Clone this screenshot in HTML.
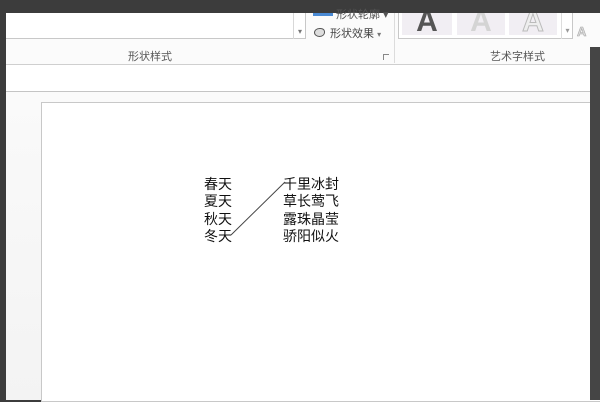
<!DOCTYPE html>
<html><head><meta charset="utf-8"><style>
body{margin:0;width:600px;height:400px;overflow:hidden;background:#3c3c3c;position:relative;font-family:"Liberation Sans","Noto Sans CJK SC",sans-serif}
div{position:absolute;box-sizing:border-box}
.t{font-size:14px;line-height:17.3px;color:#111;white-space:pre}
</style></head><body>
<div style="left:6px;top:13px;width:594px;height:52px;background:#fbfbfb;border-bottom:1px solid #cfcfcf"></div>
<div style="left:6px;top:13px;width:300px;height:26px;border-bottom:1px solid #c8c8c8;border-right:1px solid #c8c8c8;background:#fff"></div>
<div style="left:293px;top:13px;width:13px;height:26px;border-left:1px solid #d8d8d8;font-size:8px;color:#777;text-align:center;line-height:10px;padding-top:14px">▾</div>
<div style="left:313px;top:13px;width:20px;height:3px;background:#4a8ad4"></div>
<div style="left:336px;top:6px;font-size:11px;color:#555">形状轮廓 ▾</div>
<div style="left:314px;top:28px;width:11px;height:9px;border:1.5px solid #555;border-radius:50% 40% 50% 50%;background:#ddd"></div>
<div style="left:330px;top:25px;font-size:11px;color:#444">形状效果 <span style="font-size:8px;color:#777">▾</span></div>
<div style="left:394px;top:13px;width:1px;height:50px;background:#dcdcdc"></div>
<div style="left:398px;top:13px;width:175px;height:26px;border:1px solid #c8c8c8;border-top:none;background:#fff"></div>
<div style="left:402px;top:13px;width:50px;height:22px;background:#f1eef3;font-size:30px;font-weight:bold;color:#555;text-align:center;line-height:14px;overflow:hidden"><span style="position:relative;top:2px">A</span></div>
<div style="left:457px;top:13px;width:48px;height:22px;background:#f1eef3;font-size:30px;font-weight:bold;color:#d4d4d4;text-align:center;line-height:14px;overflow:hidden"><span style="position:relative;top:2px">A</span></div>
<div style="left:509px;top:13px;width:48px;height:22px;background:#f1eef3;font-size:30px;font-weight:bold;color:#eee;-webkit-text-stroke:1px #bbb;text-align:center;line-height:14px;overflow:hidden"><span style="position:relative;top:2px">A</span></div>
<div style="left:561px;top:13px;width:12px;height:26px;border-left:1px solid #ddd;font-size:8px;color:#999;text-align:center;padding-top:13px">▾</div>
<div style="left:577px;top:24px;font-size:13px;font-weight:bold;color:#ddd;-webkit-text-stroke:0.6px #aaa">A</div>
<div style="left:128px;top:48px;font-size:11px;color:#555">形状样式</div>
<div style="left:490px;top:48px;font-size:11px;color:#555">艺术字样式</div>
<div style="left:383px;top:54px;width:6px;height:6px;border-left:1px solid #888;border-top:1px solid #888;font-size:0"></div>
<div style="left:6px;top:65px;width:584px;height:27px;background:#fff;border-bottom:1px solid #c4c4c4"></div>
<div style="left:6px;top:92px;width:584px;height:308px;background:linear-gradient(#fafafa,#f3f3f3)"></div>
<div style="left:41px;top:102px;width:560px;height:300px;background:#fff;border:1px solid #c8c8c8"></div>
<div style="left:590px;top:47px;width:10px;height:353px;background:#454545"></div>
<div class="t" style="left:204px;top:176px">春天
夏天
秋天
冬天</div>
<div class="t" style="left:283px;top:176px">千里冰封
草长莺飞
露珠晶莹
骄阳似火</div>
<svg style="position:absolute;left:0;top:0" width="600" height="400"><line x1="231" y1="235" x2="285" y2="182" stroke="#444" stroke-width="1"/></svg>
</body></html>
